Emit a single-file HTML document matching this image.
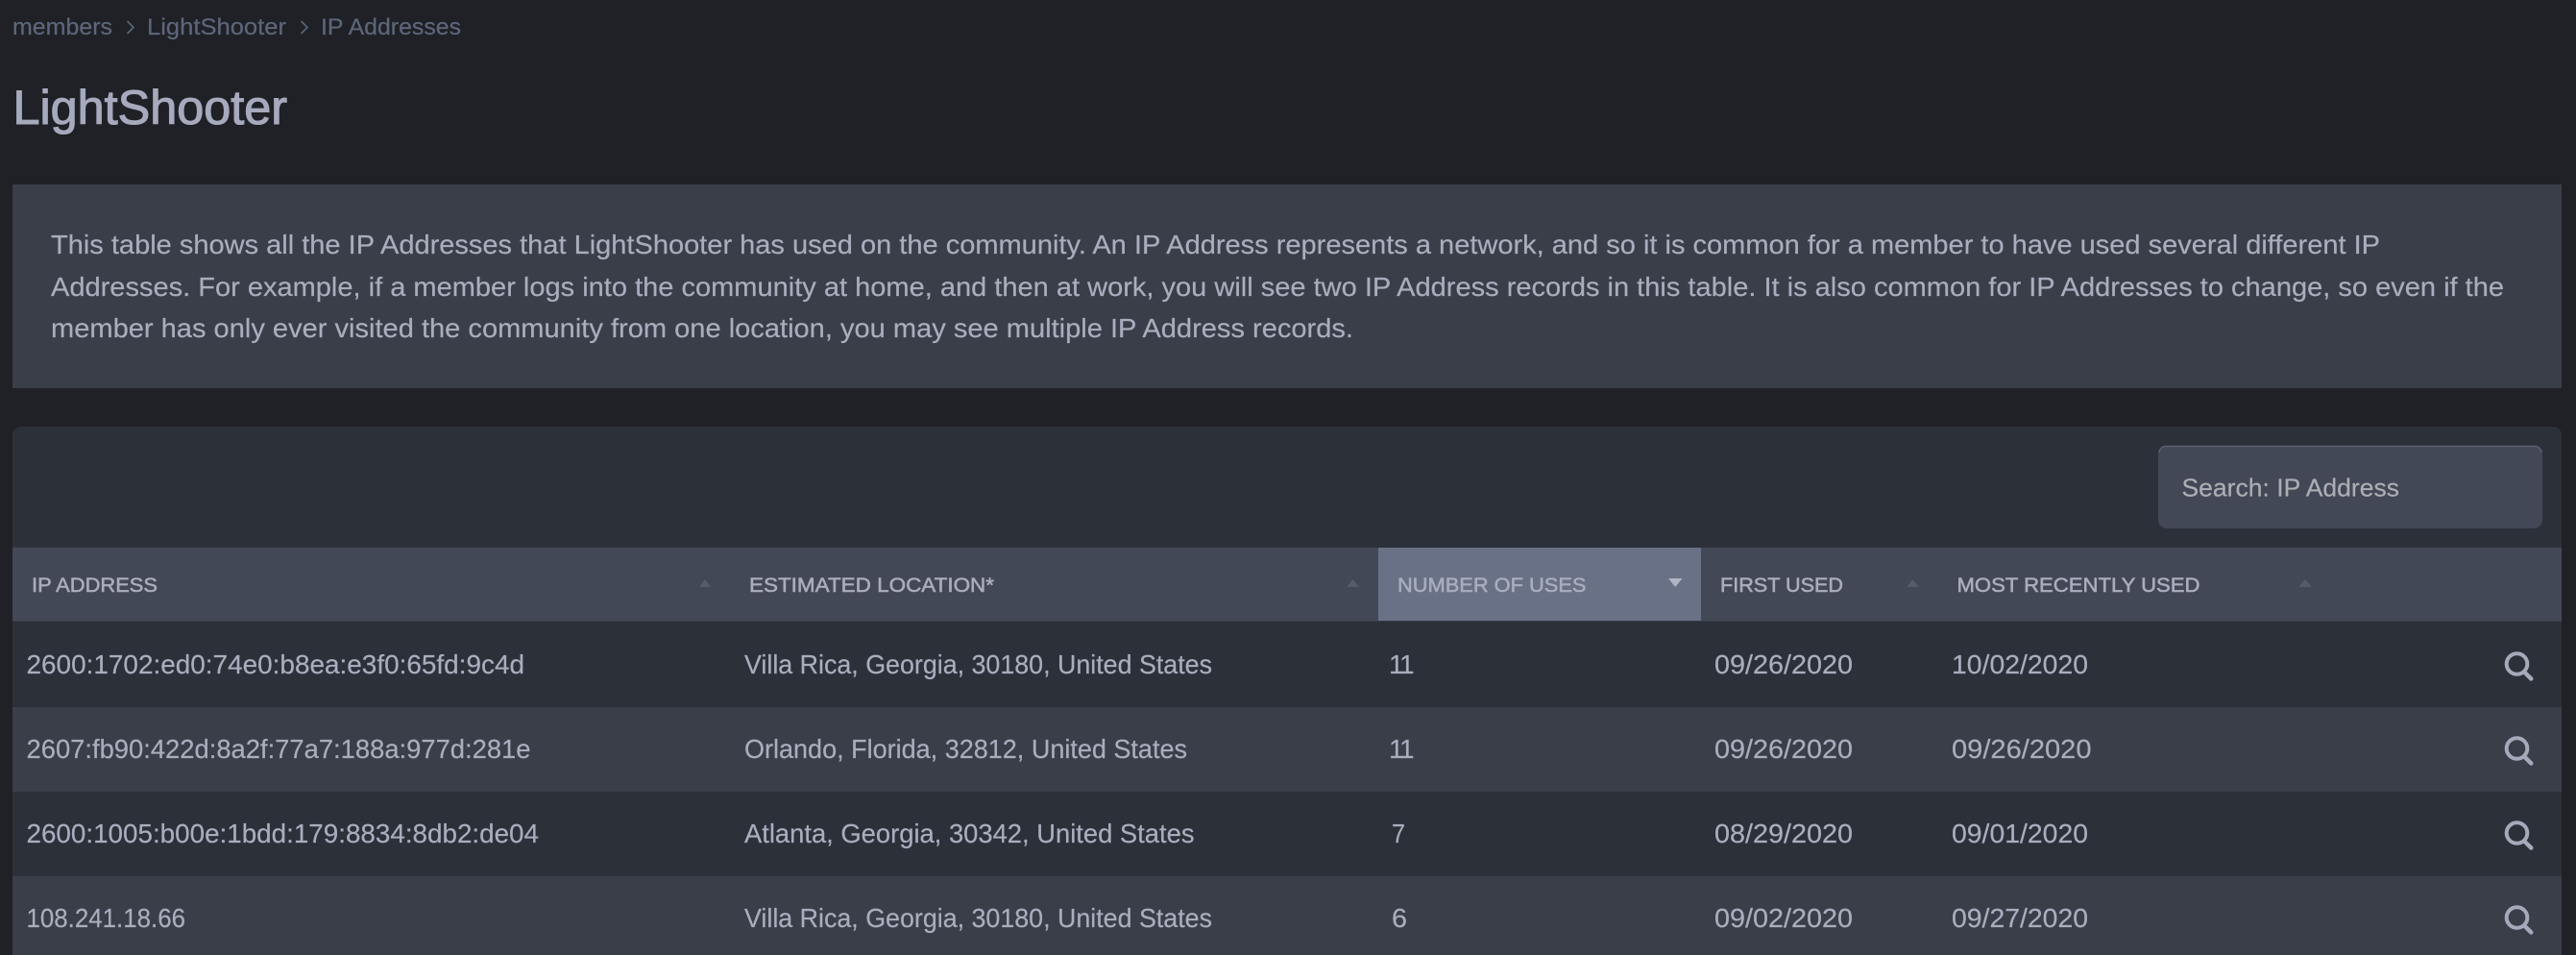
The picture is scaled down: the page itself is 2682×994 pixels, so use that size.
<!DOCTYPE html>
<html>
<head>
<meta charset="utf-8">
<title>LightShooter IP Addresses</title>
<style>
html,body{margin:0;padding:0;width:2682px;height:994px;overflow:hidden;background:#1f2126}
svg{display:block}
text{font-family:"Liberation Sans",sans-serif;fill:#a9adbd;stroke:#a9adbd;stroke-width:.2px;font-size:28px}
.bc{font-size:24px;fill:#5d667a;stroke:#5d667a}
.h1{font-size:50px;fill:#a6aabc;stroke:#a6aabc;stroke-width:1.1px}
.th{font-size:21.5px;fill:#a9adbd;stroke:#a9adbd;stroke-width:.55px}
.ic{fill:none;stroke:#a6a9ba;stroke-width:4;stroke-linecap:round}
</style>
</head>
<body>
<svg width="2682" height="994" viewBox="0 0 2682 994" xmlns="http://www.w3.org/2000/svg">
<defs>
<g id="mag" class="ic"><circle cx="0" cy="0" r="10.8"/><path d="M8 8.8L14.800 15.500" stroke-width="4.400"/></g>
</defs>
<rect width="2682" height="994" fill="#1f2126"/>

<text class="bc" x="13" y="36" textLength="104" lengthAdjust="spacingAndGlyphs">members</text>
<path d="M132.500 22L139 28.500L132.500 35" fill="none" stroke="#5d667a" stroke-width="1.600"/>
<text class="bc" x="153" y="36" textLength="145" lengthAdjust="spacingAndGlyphs">LightShooter</text>
<path d="M313.500 22L320 28.500L313.500 35" fill="none" stroke="#5d667a" stroke-width="1.600"/>
<text class="bc" x="334" y="36" textLength="146" lengthAdjust="spacingAndGlyphs">IP Addresses</text>

<text class="h1" x="13.500" y="129" textLength="285.500" lengthAdjust="spacingAndGlyphs">LightShooter</text>

<rect x="13" y="192" width="2654" height="212" fill="#3a3e49"/>
<text x="53" y="264" textLength="2425" lengthAdjust="spacingAndGlyphs">This table shows all the IP Addresses that LightShooter has used on the community. An IP Address represents a network, and so it is common for a member to have used several different IP</text>
<text x="53" y="308" textLength="2554" lengthAdjust="spacingAndGlyphs">Addresses. For example, if a member logs into the community at home, and then at work, you will see two IP Address records in this table. It is also common for IP Addresses to change, so even if the</text>
<text x="53" y="351" textLength="1356" lengthAdjust="spacingAndGlyphs">member has only ever visited the community from one location, you may see multiple IP Address records.</text>

<path d="M13 994V453a9 9 0 0 1 9-9H2658a9 9 0 0 1 9 9V994Z" fill="#2c3039"/>

<rect x="2247" y="464" width="400" height="86" rx="9" fill="#434856"/>
<path d="M2248 471a7 7 0 0 1 7-6.500H2639a7 7 0 0 1 7 6.500" fill="none" stroke="#5d616d" stroke-width="1.500"/>
<text x="2271.500" y="516.500" style="font-size:26px;fill:#acaeb3;stroke:#acaeb3" textLength="226.500" lengthAdjust="spacingAndGlyphs">Search: IP Address</text>

<rect x="13" y="570" width="2654" height="77" fill="#434856"/>
<rect x="1435" y="570" width="336" height="76" fill="#697186"/>
<rect x="13" y="646" width="2654" height="1" fill="#3a3e49"/>
<text class="th" x="33" y="616" textLength="131" lengthAdjust="spacingAndGlyphs">IP ADDRESS</text>
<text class="th" x="780" y="616" textLength="255" lengthAdjust="spacingAndGlyphs">ESTIMATED LOCATION*</text>
<text class="th" x="1455" y="616" textLength="196.500" lengthAdjust="spacingAndGlyphs">NUMBER OF USES</text>
<text class="th" x="1791" y="616" textLength="128" lengthAdjust="spacingAndGlyphs">FIRST USED</text>
<text class="th" x="2037.500" y="616" textLength="253" lengthAdjust="spacingAndGlyphs">MOST RECENTLY USED</text>

<g fill="#565b69">
<path d="M728 611L734 603L740 611Z"/>
<path d="M1402 611L1408.500 603L1415 611Z"/>
<path d="M1985 611L1991.500 603L1998 611Z"/>
<path d="M2393 611L2400 603L2407 611Z"/>
</g>
<path d="M1737 602H1751.500L1744.200 611Z" fill="#b1b4c2"/>

<rect x="13" y="736" width="2654" height="88" fill="#3a3e49"/>
<rect x="13" y="912" width="2654" height="82" fill="#3a3e49"/>

<text x="27.500" y="701" textLength="518.500" lengthAdjust="spacingAndGlyphs">2600:1702:ed0:74e0:b8ea:e3f0:65fd:9c4d</text>
<text x="775" y="701" textLength="487" lengthAdjust="spacingAndGlyphs">Villa Rica, Georgia, 30180, United States</text>
<text x="1446" y="701" style="letter-spacing:-2.5px">11</text>
<text x="1785" y="701" textLength="144" lengthAdjust="spacingAndGlyphs">09/26/2020</text>
<text x="2032" y="701" textLength="142" lengthAdjust="spacingAndGlyphs">10/02/2020</text>
<use href="#mag" x="2620.500" y="691"/>

<text x="27.500" y="789" textLength="525" lengthAdjust="spacingAndGlyphs">2607:fb90:422d:8a2f:77a7:188a:977d:281e</text>
<text x="775" y="789" textLength="461" lengthAdjust="spacingAndGlyphs">Orlando, Florida, 32812, United States</text>
<text x="1446" y="789" style="letter-spacing:-2.5px">11</text>
<text x="1785" y="789" textLength="144" lengthAdjust="spacingAndGlyphs">09/26/2020</text>
<text x="2032" y="789" textLength="145.500" lengthAdjust="spacingAndGlyphs">09/26/2020</text>
<use href="#mag" x="2620.500" y="779"/>

<text x="27.500" y="877" textLength="533.500" lengthAdjust="spacingAndGlyphs">2600:1005:b00e:1bdd:179:8834:8db2:de04</text>
<text x="775" y="877" textLength="468.500" lengthAdjust="spacingAndGlyphs">Atlanta, Georgia, 30342, United States</text>
<text x="1449" y="877" textLength="14" lengthAdjust="spacingAndGlyphs">7</text>
<text x="1785" y="877" textLength="144" lengthAdjust="spacingAndGlyphs">08/29/2020</text>
<text x="2032" y="877" textLength="142" lengthAdjust="spacingAndGlyphs">09/01/2020</text>
<use href="#mag" x="2620.500" y="867"/>

<text x="27.500" y="965" textLength="165.500" lengthAdjust="spacingAndGlyphs">108.241.18.66</text>
<text x="775" y="965" textLength="487" lengthAdjust="spacingAndGlyphs">Villa Rica, Georgia, 30180, United States</text>
<text x="1449" y="965" textLength="16" lengthAdjust="spacingAndGlyphs">6</text>
<text x="1785" y="965" textLength="144" lengthAdjust="spacingAndGlyphs">09/02/2020</text>
<text x="2032" y="965" textLength="142" lengthAdjust="spacingAndGlyphs">09/27/2020</text>
<use href="#mag" x="2620.500" y="955"/>
</svg>
</body>
</html>
